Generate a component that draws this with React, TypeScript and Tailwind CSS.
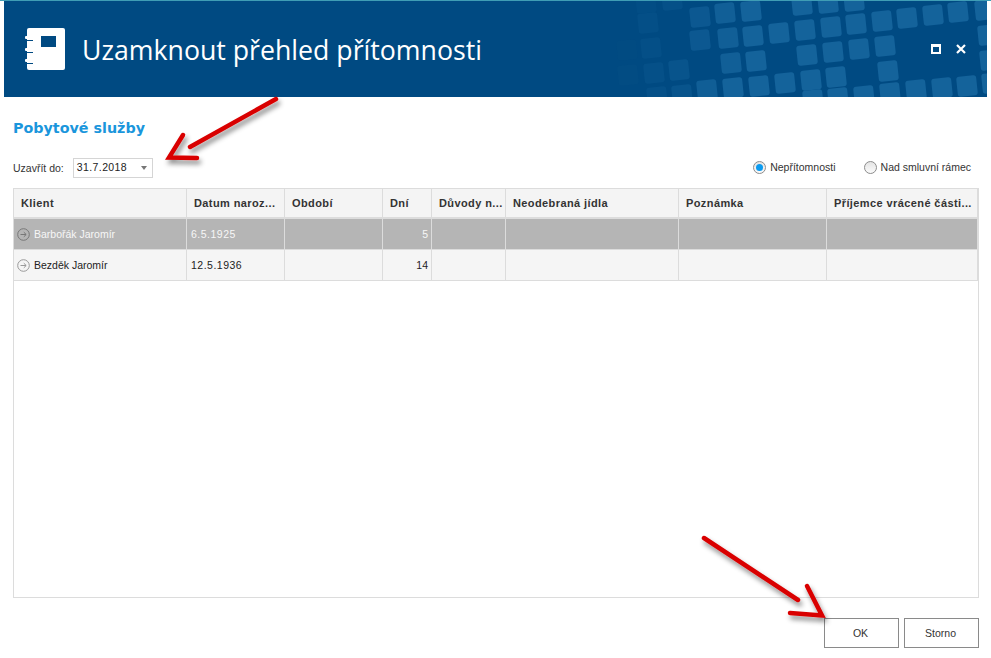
import React from "react";

const COLUMNS = [
  "Klient",
  "Datum naroz...",
  "Období",
  "Dní",
  "Důvody n...",
  "Neodebraná jídla",
  "Poznámka",
  "Příjemce vrácené části...",
];

const GRID = "grid grid-cols-[173px_98px_98px_49px_74px_173px_148px_151px]";

// header tiles, page coords, [cx, cy, opacity]
const TILES: [number, number, number][] = [
  [646, 3, 0.12], [672, 0, 0.25], [725, 13, 0.85], [751, 11, 1], [802, 5, 1], [828, 3, 1], [854, 1, 1],
  [648, 23, 0.2], [700, 17, 0.6], [700, 40, 0.6],
  [728, 38, 0.85], [753, 36, 1], [779, 33, 1], [805, 30, 1], [831, 27, 1], [856, 24, 1], [882, 21, 1], [907, 18, 1], [933, 15, 1], [958, 12, 1], [985, 10, 1],
  [627, 50, 0.04], [651, 48, 0.2], [731, 63, 0.85], [756, 61, 1], [807, 55, 1], [833, 52, 1], [859, 49, 1], [885, 46, 1], [988, 35, 1],
  [628, 75, 0.08], [654, 73, 0.25], [679, 70, 0.4], [707, 90, 0.8], [733, 88, 1], [759, 86, 1], [785, 83, 1], [811, 80, 1], [836, 77, 1], [888, 71, 1], [990, 60, 1],
  [657, 97, 0.25], [682, 95, 0.4], [813, 100, 1], [838, 98, 1], [864, 96, 1], [890, 93, 1], [916, 90, 1], [942, 88, 1], [967, 86, 1], [992, 83, 1],
];

function HeaderPattern() {
  return (
    <svg className="absolute inset-0" width={983} height={96} viewBox="4 1 983 96">
      {TILES.map(([cx, cy, o], i) => (
        <rect
          key={i}
          x={cx - 10}
          y={cy - 10}
          width={20}
          height={20}
          rx={3}
          fill="#14639b"
          opacity={o}
          transform={`rotate(-6 ${cx} ${cy})`}
        />
      ))}
    </svg>
  );
}

function NotebookIcon() {
  return (
    <svg width={40} height={44} viewBox="0 0 40 44" className="shrink-0">
      <rect x={2} y={1} width={38} height={42} rx={2} fill="#fff" />
      <rect x={16} y={9} width={15} height={11} fill="#004a82" />
      <g fill="#004a82">
        <rect x={2} y={13} width={6} height={1} />
        <rect x={2} y={25} width={6} height={1} />
        <rect x={2} y={36} width={6} height={1} />
      </g>
      <g fill="#fff">
        <rect x={0} y={9} width={8} height={3} rx={1} />
        <rect x={0} y={21} width={8} height={3} rx={1} />
        <rect x={0} y={32} width={8} height={3} rx={1} />
      </g>
    </svg>
  );
}

function RowArrow({ color }: { color: string }) {
  return (
    <svg width={13} height={13} viewBox="0 0 13 13" className="shrink-0 -translate-y-px">
      <circle cx={6.5} cy={6.5} r={5.8} fill="none" stroke={color} strokeWidth={1} />
      <path d="M3.5 6.5h5.5M6.8 4.2l2.4 2.3-2.4 2.3" fill="none" stroke={color} strokeWidth={1} />
    </svg>
  );
}

function Radio({ checked, label }: { checked?: boolean; label: string }) {
  return (
    <div className="flex items-center gap-[4px]">
      <span className="flex h-[13px] w-[13px] items-center justify-center rounded-full border border-[#8c8c8c] bg-gradient-to-b from-[#e4e4e4] to-[#fbfbfb]">
        {checked && <span className="h-[7px] w-[7px] rounded-full bg-[#0b9bf0]" />}
      </span>
      <span>{label}</span>
    </div>
  );
}

function Row({ name, date, days, selected }: { name: string; date: string; days: string; selected?: boolean }) {
  const cell = "border-r border-[#dcdcdc] flex items-center h-full pt-[2px]";
  return (
    <div
      className={`${GRID} h-[31px] border-b border-[#dcdcdc] ${
        selected ? "bg-[#b5b5b5] text-[#f7f7f7]" : "bg-[#f5f5f5] text-[#222]"
      }`}
    >
      <div className={`${cell} gap-[4px] pl-[3px]`}>
        <RowArrow color={selected ? "#777777" : "#999999"} />
        <span>{name}</span>
      </div>
      <div className={`${cell} pl-[4px] tracking-[0.5px]`}>{date}</div>
      <div className={cell} />
      <div className={`${cell} justify-end pr-[3px]`}>{days}</div>
      <div className={cell} />
      <div className={cell} />
      <div className={cell} />
      <div className={cell} />
    </div>
  );
}

export default function App() {
  return (
    <div className="relative flex h-[658px] w-[991px] flex-col overflow-hidden bg-white font-['Liberation_Sans',sans-serif] text-[10.5px] text-[#333]">
      <div className="h-px shrink-0 bg-[#3f9db5]" />

      <header className="relative mx-[4px] flex h-[96px] shrink-0 items-center bg-[#004a82] pl-[21px] text-white">
        <HeaderPattern />
        <div className="relative flex items-center gap-[17px]">
          <NotebookIcon />
          <h1 className="pt-[3px] font-['Open_Sans',sans-serif] text-[26.7px] leading-none">Uzamknout přehled přítomnosti</h1>
        </div>
        <div className="absolute left-[927px] top-[43px] flex items-center gap-[15px]">
          <div className="h-[10px] w-[10px] border-x-[2px] border-b-[2px] border-t-[3px] border-white" />
          <svg width={10} height={10} viewBox="0 0 10 10">
            <path d="M1 1l8 8M9 1l-8 8" stroke="#fff" strokeWidth={2.2} />
          </svg>
        </div>
      </header>

      <main className="flex flex-1 flex-col pl-[13px] pr-[12px] pt-[21px]">
        <h2 className="h-[21px] font-['DejaVu_Sans',sans-serif] text-[14.3px] font-bold leading-[21px] text-[#1a96dc]">
          Pobytové služby
        </h2>

        <div className="mt-[18px] flex h-[21px] items-center justify-between pr-[8px]">
          <div className="flex items-center gap-[9px]">
            <span className="pt-[2px]">Uzavřít do:</span>
            <div className="flex h-[20px] w-[80px] items-center justify-between border border-[#d5d5d5] pl-[3px] pr-[5px] pt-px tracking-[0.4px] text-[#222]">
              <span>31.7.2018</span>
              <span className="h-0 w-0 border-x-[3.5px] border-t-[4px] border-x-transparent border-t-[#777]" />
            </div>
          </div>
          <div className="flex items-center gap-[28px]">
            <Radio checked label="Nepřítomnosti" />
            <Radio label="Nad smluvní rámec" />
          </div>
        </div>

        <div className="mt-[10px] h-[410px] w-[966px] border border-[#dcdcdc]">
          <div className={`${GRID} h-[30px] border-b-2 border-[#dcdcdc] bg-[#f4f4f4]`}>
            {COLUMNS.map((label) => (
              <div
                key={label}
                className="flex h-full items-center border-r border-[#dcdcdc] pl-[7px] text-[11px] font-bold tracking-[0.4px] text-[#333]"
              >
                {label}
              </div>
            ))}
          </div>
          <Row selected name="Barbořák Jaromír" date="6.5.1925" days="5" />
          <Row name="Bezděk Jaromír" date="12.5.1936" days="14" />
        </div>

        <div className="mt-[20px] flex justify-end gap-[5px]">
          <button className="h-[30px] w-[75px] border border-[#8a8a8a] bg-white pt-[2px] pr-[2px] text-[#333]">OK</button>
          <button className="h-[30px] w-[75px] border border-[#8a8a8a] bg-white pt-[2px] pr-[2px] text-[#333]">Storno</button>
        </div>
      </main>

      {/* red annotation arrows */}
      <svg className="pointer-events-none absolute inset-0" width={991} height={658} viewBox="0 0 991 658">
        <defs>
          <filter id="arrow-shadow" x="-30%" y="-30%" width="160%" height="160%">
            <feDropShadow dx={2} dy={4} stdDeviation={2.5} floodColor="#000" floodOpacity={0.45} />
          </filter>
        </defs>
        <g fill="none" stroke="#d90000" strokeWidth={4.5} strokeLinecap="round" strokeLinejoin="miter" filter="url(#arrow-shadow)">
          <path d="M276 99L190 147" />
          <path d="M183 135L169 157.5L197 158" />
          <path d="M704 538L798 600" />
          <path d="M807 586L822 615.5L790 613" />
        </g>
      </svg>
    </div>
  );
}
